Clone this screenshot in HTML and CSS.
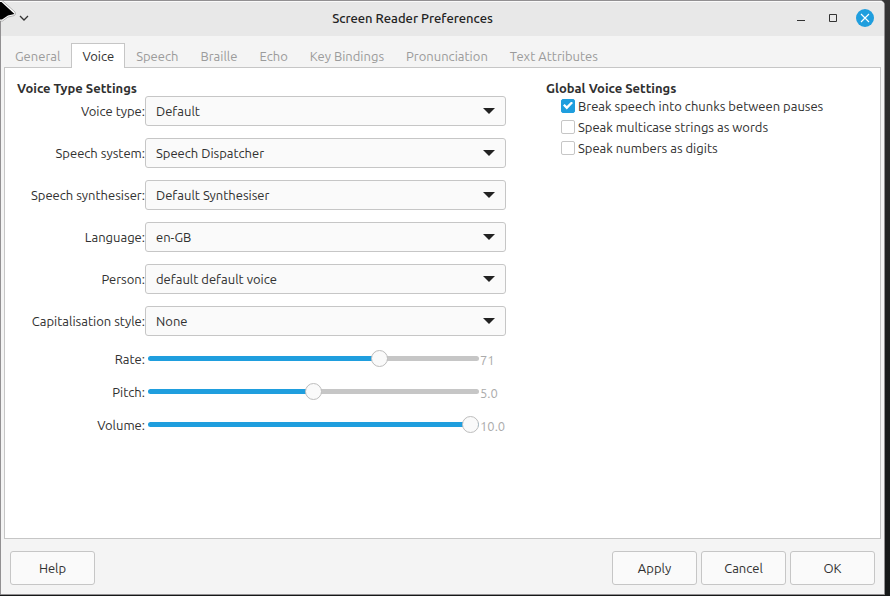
FILE: index.html
```html
<!DOCTYPE html>
<html lang="en-GB">
<head>
<meta charset="utf-8">
<title>Screen Reader Preferences</title>
<link rel="stylesheet" href="styles.css">
</head>
<body>
<main class="window">
  <header class="titlebar">
    <button class="window-button" type="button" aria-label="Window menu">
      <svg width="12" height="12" viewBox="0 0 12 12"><path d="M2 4l4 4 4-4" fill="none" stroke="#333" stroke-width="1.3"/></svg>
    </button>
    <h1 class="title">Screen Reader Preferences</h1>
    <button class="window-button" type="button" aria-label="Minimise">
      <svg width="18" height="18" viewBox="0 0 18 18"><path d="M5 11.5h8" stroke="#333" fill="none"/></svg>
    </button>
    <button class="window-button" type="button" aria-label="Maximise">
      <svg width="18" height="18" viewBox="0 0 18 18"><path d="M5.500 5.500h7v7h-7z" stroke="#333" fill="none"/></svg>
    </button>
    <button class="window-button" type="button" aria-label="Close">
      <svg width="18" height="18" viewBox="0 0 18 18"><circle cx="9" cy="9" r="9" fill="#1f9ede"/><path d="M5 5l8 8M13 5l-8 8" stroke="#fff" stroke-width="1.100"/></svg>
    </button>
  </header>

  <nav class="tabs" role="tablist">
    <button class="tab" type="button" role="tab">General</button>
    <button class="tab tab-active" type="button" role="tab" aria-selected="true">Voice</button>
    <button class="tab" type="button" role="tab">Speech</button>
    <button class="tab" type="button" role="tab">Braille</button>
    <button class="tab" type="button" role="tab">Echo</button>
    <button class="tab" type="button" role="tab">Key Bindings</button>
    <button class="tab" type="button" role="tab">Pronunciation</button>
    <button class="tab" type="button" role="tab">Text Attributes</button>
  </nav>

  <div class="page" role="tabpanel">
    <section>
      <h2 class="heading">Voice Type Settings</h2>
      <div class="form">
        <label for="voice-type">Voice type:</label>
        <div class="combo"><select id="voice-type"><option>Default</option></select></div>
        <label for="system">Speech system:</label>
        <div class="combo"><select id="system"><option>Speech Dispatcher</option></select></div>
        <label for="synthesiser">Speech synthesiser:</label>
        <div class="combo"><select id="synthesiser"><option>Default Synthesiser</option></select></div>
        <label for="language">Language:</label>
        <div class="combo"><select id="language"><option>en-GB</option></select></div>
        <label for="person">Person:</label>
        <div class="combo"><select id="person"><option>default default voice</option></select></div>
        <label for="capitals">Capitalisation style:</label>
        <div class="combo"><select id="capitals"><option>None</option></select></div>
        <label for="rate">Rate:</label>
        <div class="scale"><input id="rate" type="range" min="0" max="100" value="71" style="--fill: 71%"><output for="rate">71</output></div>
        <label for="pitch">Pitch:</label>
        <div class="scale"><input id="pitch" type="range" min="0" max="10" step="0.1" value="5" style="--fill: 50%"><output for="pitch">5.0</output></div>
        <label for="volume">Volume:</label>
        <div class="scale"><input id="volume" type="range" min="0" max="10" step="0.1" value="10" style="--fill: 100%"><output for="volume">10.0</output></div>
      </div>
    </section>

    <section>
      <h2 class="heading">Global Voice Settings</h2>
      <div class="checks">
        <label class="check"><input type="checkbox" checked>Break speech into chunks between pauses</label>
        <label class="check"><input type="checkbox">Speak multicase strings as words</label>
        <label class="check"><input type="checkbox">Speak numbers as digits</label>
      </div>
    </section>
  </div>

  <footer class="actions">
    <button class="button button-help" type="button">Help</button>
    <button class="button" type="button">Apply</button>
    <button class="button" type="button">Cancel</button>
    <button class="button" type="button">OK</button>
  </footer>
</main>
<svg class="pointer" width="17" height="23" viewBox="0 0 17 23" aria-hidden="true"><path d="M-1 .5L2 .5L15 12Q16.500 15.500 12.500 16L8 17L2.500 21H-1Z" fill="#fff" stroke="#888" stroke-width=".6"/><path d="M-1 2L1.500 2L14.500 14L8 15.500L2 19.500H-1Z" fill="#000"/></svg>
</body>
</html>
```
FILE: styles.css
```css
:root {
  --accent: #1f9ede;
  --line: #c6c6c6;
  --text: #303030;
}

* {
  box-sizing: border-box;
}

body {
  margin: 0;
  min-height: 100vh;
  display: flex;
  padding: 0 5px 1px 0;
  background: linear-gradient(#363636, #2b2b2b 20%, #1a1c1c 60%, #161818);
  color: var(--text);
  font: 13px/16px Ubuntu, "Noto Sans", sans-serif;
}

button,
select {
  font: inherit;
  color: inherit;
}

.window {
  flex: 1;
  display: flex;
  flex-direction: column;
  border: 1px solid #929092;
  border-radius: 0 5px 0 0;
  background: #f4f4f4;
}

.titlebar {
  display: flex;
  align-items: center;
  height: 35px;
  padding: 0 3px 2px 7px;
  background: #e8e8e8;
  border-top: 1px solid #fafafa;
  border-radius: 0 4px 0 0;
}

.title {
  flex: 1;
  margin: 0;
  font-size: 13px;
  font-weight: 500;
  text-align: center;
  color: #222;
}

.window-button {
  display: grid;
  place-items: center;
  width: 32px;
  height: 32px;
  padding: 0;
  border: 0;
  background: none;
}

.tabs {
  display: flex;
  margin: 7px 3px 0;
}

.tab {
  height: 25px;
  margin-bottom: -1px;
  padding: 0 10px;
  border: 1px solid transparent;
  border-bottom: 0;
  background: none;
  color: #9b9b9b;
}

.tab-active {
  position: relative;
  border-color: var(--line);
  background: #fff;
  color: var(--text);
}

.page {
  flex: 1;
  display: grid;
  grid-template-columns: 489fr 322fr;
  gap: 40px;
  margin: 0 3px;
  padding: 12px;
  border: 1px solid var(--line);
  background: #fff;
}

.heading {
  margin: 0;
  font-size: 13px;
  font-weight: 700;
  line-height: 16px;
}

.form {
  display: grid;
  grid-template-columns: 128px 1fr;
  align-items: center;
  row-gap: 12px;
  text-align: right;
}

.form label {
  white-space: nowrap;
}

.combo {
  position: relative;
}

.combo select {
  display: block;
  width: 100%;
  height: 30px;
  padding: 0 10px;
  appearance: none;
  border: 1px solid var(--line);
  border-radius: 3px;
  background: #fafafa;
}

.combo::after {
  content: "";
  position: absolute;
  top: 12px;
  right: 11px;
  width: 12px;
  height: 6px;
  background: #222;
  clip-path: polygon(0 0, 100% 0, 50% 100%);
  pointer-events: none;
}

.scale {
  display: flex;
  align-items: center;
  height: 21px;
  padding-left: 3px;
  text-align: left;
}

.scale input {
  flex: 1;
  min-width: 0;
  height: 17px;
  margin: 0;
  appearance: none;
  background: none;
}

.scale input::-webkit-slider-runnable-track {
  height: 5px;
  border-radius: 3px;
  background: linear-gradient(90deg, var(--accent) var(--fill), var(--line) var(--fill));
}

.scale input::-webkit-slider-thumb {
  appearance: none;
  width: 17px;
  height: 17px;
  margin-top: -6px;
  border: 1px solid #bdbdbd;
  border-radius: 50%;
  background: #fafafa;
}

.scale output {
  width: 27px;
  padding: 3px 0 0 1px;
  color: #ababab;
}

.checks {
  margin-top: -1px;
  padding-left: 15px;
}

.check {
  display: flex;
  align-items: center;
  gap: 3px;
  height: 21px;
  white-space: nowrap;
}

.check input {
  display: grid;
  place-items: center;
  width: 14px;
  height: 14px;
  margin: 0;
  appearance: none;
  border: 1px solid var(--line);
  border-radius: 2px;
  background: #fff;
}

.check input:checked {
  border-color: var(--accent);
  background: var(--accent);
}

.check input:checked::before {
  content: "";
  width: 10px;
  height: 8px;
  background: #fff;
  clip-path: polygon(0 50%, 16% 30%, 38% 56%, 84% 0, 100% 20%, 38% 100%);
}

.actions {
  display: flex;
  gap: 4px;
  padding: 12px 9px 9px;
}

.button {
  width: 85px;
  height: 34px;
  padding: 0;
  border: 1px solid var(--line);
  border-radius: 3px;
  background: #fafafa;
}

.button-help {
  margin-right: auto;
}

.pointer {
  position: absolute;
  top: 0;
  left: 0;
}
```
